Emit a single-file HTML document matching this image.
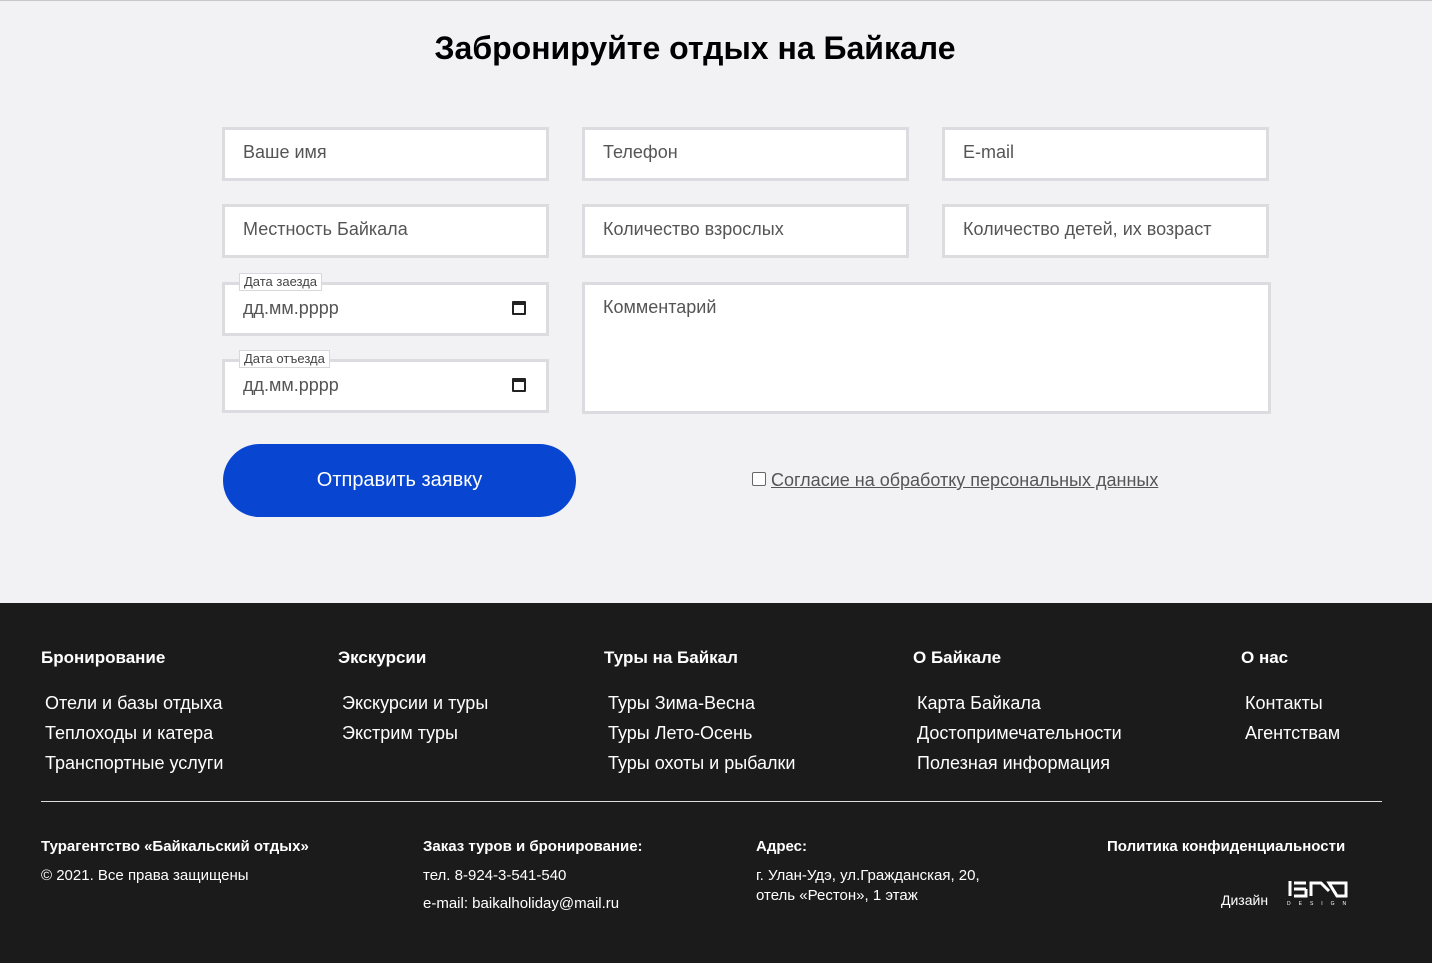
<!DOCTYPE html>
<html><head><meta charset="utf-8"><style>
*{margin:0;padding:0;box-sizing:border-box}
body{width:1432px;height:962px;background:#f2f2f5;font-family:"Liberation Sans",sans-serif;position:relative;overflow:hidden;border-top:1px solid #c8c8c8}
.a{position:absolute}
h1{position:absolute;top:29px;left:0;width:1390px;text-align:center;font-size:32px;font-weight:bold;color:#000}
.in{position:absolute;width:327px;height:54px;background:#fff;border:3px solid #dcdce0;font-size:18px;color:#555;padding:12px 0 0 18px}
.lb{position:absolute;font-size:13px;color:#444;background:#fff;border:1px solid #d8d8dc;padding:0 4px;line-height:16px}
.cal{position:absolute;width:14px;height:14px;border:2px solid #222;border-top-width:4px;border-radius:1px}
.ft{position:absolute;top:602px;left:0;width:1432px;height:360px;background:#1b1b1b;color:#fff}
.h{position:absolute;top:45px;font-size:17px;font-weight:bold}
.l{position:absolute;top:85px;font-size:18px;line-height:30px}
.s{position:absolute;font-size:15px;line-height:20px}
</style></head><body>
<h1>Забронируйте отдых на Байкале</h1>
<div class="in" style="left:222px;top:126px">Ваше имя</div>
<div class="in" style="left:582px;top:126px">Телефон</div>
<div class="in" style="left:942px;top:126px">E-mail</div>
<div class="in" style="left:222px;top:203px">Местность Байкала</div>
<div class="in" style="left:582px;top:203px">Количество взрослых</div>
<div class="in" style="left:942px;top:203px">Количество детей, их возраст</div>
<div class="in" style="left:222px;top:281px;padding-top:13px">дд.мм.рррр</div>
<div class="lb" style="left:239px;top:272px">Дата заезда</div>
<div class="cal" style="left:512px;top:300px"></div>
<div class="in" style="left:222px;top:358px;padding-top:13px">дд.мм.рррр</div>
<div class="lb" style="left:239px;top:349px">Дата отъезда</div>
<div class="cal" style="left:512px;top:377px"></div>
<div class="in" style="left:582px;top:281px;width:689px;height:132px;padding-top:12px">Комментарий</div>
<div class="a" style="left:223px;top:443px;width:353px;height:73px;background:#0846d2;border-radius:37px;color:#fff;font-size:20px;text-align:center;line-height:72px">Отправить заявку</div>
<div class="a" style="left:752px;top:471px;width:14px;height:14px;border:1px solid #666;border-radius:2px;background:#fff"></div>
<div class="a" style="left:771px;top:469px;font-size:18px;color:#555;text-decoration:underline">Согласие на обработку персональных данных</div>
<div class="ft">
<div class="h" style="left:41px">Бронирование</div>
<div class="h" style="left:338px">Экскурсии</div>
<div class="h" style="left:604px">Туры на Байкал</div>
<div class="h" style="left:913px">О Байкале</div>
<div class="h" style="left:1241px">О нас</div>
<div class="l" style="left:45px">Отели и базы отдыха<br>Теплоходы и катера<br>Транспортные услуги</div>
<div class="l" style="left:342px">Экскурсии и туры<br>Экстрим туры</div>
<div class="l" style="left:608px">Туры Зима-Весна<br>Туры Лето-Осень<br>Туры охоты и рыбалки</div>
<div class="l" style="left:917px">Карта Байкала<br>Достопримечательности<br>Полезная информация</div>
<div class="l" style="left:1245px">Контакты<br>Агентствам</div>
<div class="a" style="left:41px;top:198px;width:1341px;height:1px;background:#ddd"></div>
<div class="s" style="left:41px;top:234px;font-weight:bold">Турагентство «Байкальский отдых»</div>
<div class="s" style="left:41px;top:263px">© 2021. Все права защищены</div>
<div class="s" style="left:423px;top:234px;font-weight:bold">Заказ туров и бронирование:</div>
<div class="s" style="left:423px;top:263px">тел. 8-924-3-541-540</div>
<div class="s" style="left:423px;top:291px">e-mail: baikalholiday@mail.ru</div>
<div class="s" style="left:756px;top:234px;font-weight:bold">Адрес:</div>
<div class="s" style="left:756px;top:263px">г. Улан-Удэ, ул.Гражданская, 20,<br>отель «Рестон», 1 этаж</div>
<div class="s" style="left:1107px;top:234px;font-weight:bold">Политика конфиденциальности</div>
<div class="s" style="left:1221px;top:287px;font-size:14px">Дизайн</div>
<svg class="a" style="left:1287px;top:277px" width="61" height="26" viewBox="0 0 61 26"><g fill="none" stroke="#fff" stroke-width="3"><path d="M3 1v15M7 3h12M7 9h12M19 9v7H7M24 16V3h10l8 8M42 3h17v13H50z"/></g><text x="0" y="25" font-size="5" fill="#fff" letter-spacing="8" font-family="Liberation Sans">DESIGN</text></svg>
</div>
</body></html>
